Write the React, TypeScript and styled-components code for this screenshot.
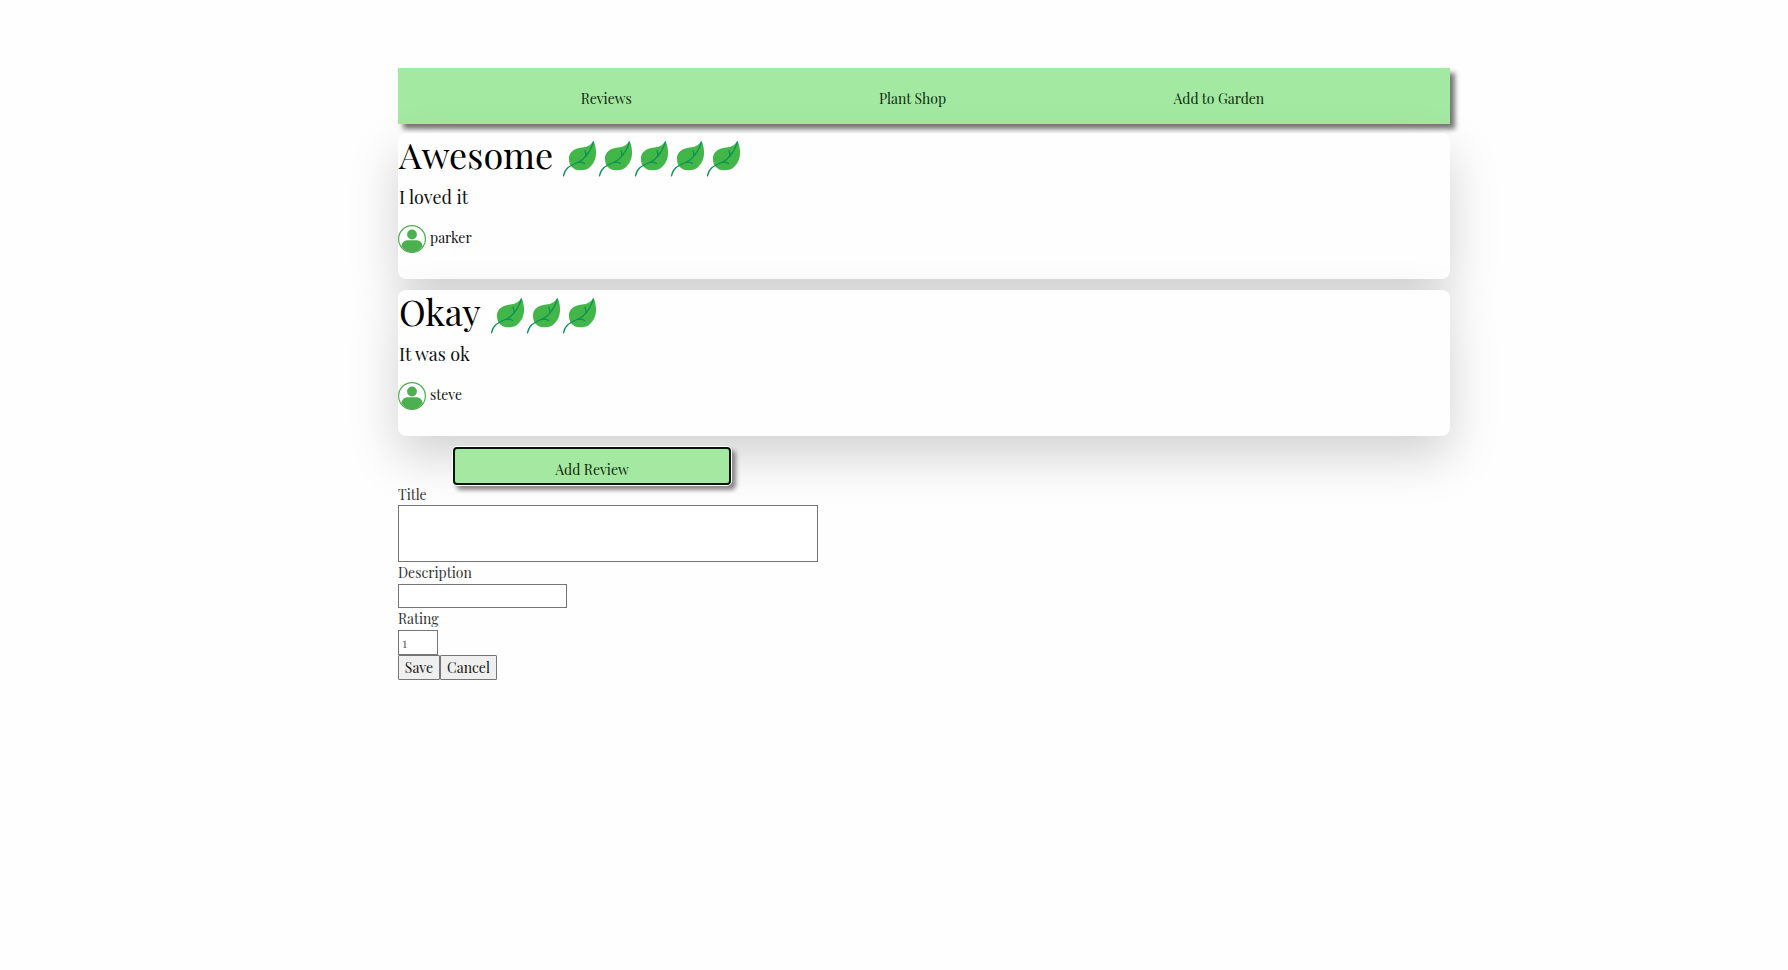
import React from 'react';
import styled, { createGlobalStyle } from 'styled-components';

const GlobalStyle = createGlobalStyle`
  *, *::before, *::after { box-sizing: border-box; }
  body {
    margin: 0;
    background: #fefefe;
    color: #111;
    font-family: "Playfair Display", "Liberation Serif", serif;
    font-size: 14px;
  }
  button, input { font-family: inherit; margin: 0; }
`;

const Page = styled.div`
  display: grid;
  grid-template-columns: 199fr minmax(0, 526fr) 169fr;
  padding: 68px 0 40px;
`;

const Content = styled.main`
  grid-column: 2;
  display: flex;
  flex-direction: column;
`;

const NavBar = styled.nav`
  display: grid;
  grid-template-columns: repeat(3, 1fr);
  align-items: center;
  height: 56px;
  padding: 4px 78px 0 55px;
  background: #a4e9a2;
  box-shadow: 5px 5px 5px #777;
`;

const NavLink = styled.a`
  color: #0c2a0c;
  text-align: center;
  text-decoration: none;
`;

const ReviewList = styled.section`
  display: flex;
  flex-direction: column;
  gap: 11px;
  margin: 9px 0 11px;
`;

const Card = styled.article`
  display: flex;
  flex-direction: column;
  min-height: 146px;
  border-radius: 8px;
  background: #fefefe;
  box-shadow: 0 20px 50px rgba(0, 0, 0, 0.18);
`;

const CardHead = styled.header`
  display: flex;
  align-items: flex-start;
  gap: 9px;
  height: 46px;
  padding-left: 1px;
`;

const CardTitle = styled.h2`
  margin: 0;
  font-size: 36px;
  font-weight: 400;
  line-height: 42px;
  color: #000;
`;

const Leaves = styled.div`
  display: flex;
  padding-top: 8px;
`;

const CardText = styled.p`
  margin: 6px 0 16px;
  padding-left: 1px;
  font-size: 18px;
  line-height: 24px;
`;

const Author = styled.div`
  display: flex;
  align-items: center;
  gap: 4px;
`;

const AuthorName = styled.span`
  padding-bottom: 2px;
  line-height: 20px;
`;

const AddButton = styled.button`
  width: 278px;
  height: 38px;
  margin-left: 55px;
  padding: 6px 0 0;
  border: 2px solid #04140a;
  border-radius: 4px;
  background: #a4e8a2;
  box-shadow: 0 0 0 1px #fff, 4px 4px 4px 1px #8d8589;
  color: #0c2a0c;
  font-size: 14px;
`;

const Form = styled.form`
  display: flex;
  flex-direction: column;
  align-items: flex-start;
`;

const Field = styled.div`
  display: flex;
  flex-direction: column;
  max-width: 100%;
  & + & { margin-top: 1px; padding-bottom: 0; }
  & + & > label { padding-bottom: 1px; }
`;

const Label = styled.label`
  line-height: 20px;
  color: #333;
`;

const Input = styled.input<{ $width: number; $height: number }>`
  width: ${(p) => p.$width}px;
  height: ${(p) => p.$height}px;
  max-width: 100%;
  padding: 0 3px;
  border: 1px solid #767676;
  border-radius: 0;
  background: #fff;
  color: #222;
  font-size: 14px;
  &::placeholder { color: #757575; opacity: 1; }
`;

const Actions = styled.div`
  display: flex;
`;

const FormButton = styled.button<{ $width: number }>`
  width: ${(p) => p.$width}px;
  height: 25px;
  padding: 0;
  border: 1px solid #767676;
  border-radius: 1px;
  background: #efefef;
  color: #111;
  font-size: 14px;
`;

const Leaf = () => (
  <svg width="36" height="36" viewBox="0 0 36 36" fill="none" aria-hidden="true">
    <path
      d="M31.5 0C28.5 4.5 25 6 20 6.600C12 7.500 6.400 11.500 7 18.800C7.200 21.500 8 24 9.500 25.800C12 28.500 15.500 29.600 19 29.300C22.500 29.200 26 28.500 28 26C33.500 21 35 14 33.500 6C33 3.800 32.500 1.800 31.500 0Z"
      fill="#43b649"
    />
    <path
      d="M31.300 1C29.500 7.500 26 13.500 20.500 18.500C14.500 23.500 3.500 23.500 1.500 34.800M22.800 9.300C23.700 11 24.200 13 23.800 15.300M16.500 21.300C18.500 21 20.500 21.400 22.600 22.500"
      stroke="#0b9156"
      strokeWidth="1.2"
      strokeLinecap="round"
    />
  </svg>
);

const Avatar = () => (
  <svg width="28" height="28" viewBox="0 0 28 28" aria-hidden="true">
    <circle cx="14" cy="14" r="13.400" fill="#fff" stroke="#4caf50" strokeWidth="1.200" />
    <circle cx="14" cy="9.500" r="4.900" fill="#4caf50" />
    <path
      d="M3.400 20.800C4 17.500 6.500 15.300 10 15.300H18C21.500 15.300 24 17.500 24.600 20.800C22.300 24.900 18.500 27.300 14 27.300C9.500 27.300 5.700 24.900 3.400 20.800Z"
      fill="#4caf50"
    />
  </svg>
);

const reviews = [
  { title: 'Awesome', rating: 5, text: 'I loved it', author: 'parker' },
  { title: 'Okay', rating: 3, text: 'It was ok', author: 'steve' },
];

export default function App() {
  return (
    <>
      <GlobalStyle />
      <Page>
        <Content>
          <NavBar>
            <NavLink href="#reviews">Reviews</NavLink>
            <NavLink href="#shop">Plant Shop</NavLink>
            <NavLink href="#garden">Add to Garden</NavLink>
          </NavBar>
          <ReviewList id="reviews">
            {reviews.map((r) => (
              <Card key={r.title}>
                <CardHead>
                  <CardTitle>{r.title}</CardTitle>
                  <Leaves>
                    {Array.from({ length: r.rating }, (_, i) => (
                      <Leaf key={i} />
                    ))}
                  </Leaves>
                </CardHead>
                <CardText>{r.text}</CardText>
                <Author>
                  <Avatar />
                  <AuthorName>{r.author}</AuthorName>
                </Author>
              </Card>
            ))}
          </ReviewList>
          <AddButton type="button">Add Review</AddButton>
          <Form onSubmit={(e) => e.preventDefault()}>
            <Field>
              <Label htmlFor="title">Title</Label>
              <Input id="title" type="text" $width={420} $height={57} />
            </Field>
            <Field>
              <Label htmlFor="description">Description</Label>
              <Input id="description" type="text" $width={169} $height={24} />
            </Field>
            <Field>
              <Label htmlFor="rating">Rating</Label>
              <Input id="rating" type="number" min={1} max={5} placeholder="1" $width={40} $height={25} />
            </Field>
            <Actions>
              <FormButton type="submit" $width={42}>Save</FormButton>
              <FormButton type="button" $width={57}>Cancel</FormButton>
            </Actions>
          </Form>
        </Content>
      </Page>
    </>
  );
}
